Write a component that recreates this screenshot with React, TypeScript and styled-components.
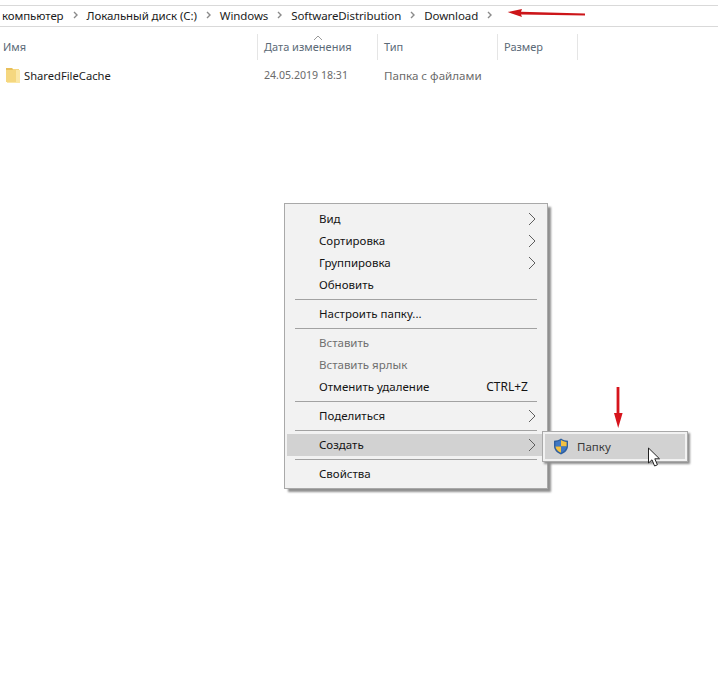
import React from 'react';
import styled, { createGlobalStyle } from 'styled-components';

const GlobalStyle = createGlobalStyle`
  html, body {
    margin: 0;
    padding: 0;
    background: #fff;
  }
  body {
    font-family: "Noto Sans", "Open Sans", sans-serif;
    font-size: 12px;
    color: #1a1a1a;
  }
`;

const Page = styled.div`
  position: relative;
  width: 718px;
  height: 699px;
  overflow: hidden;
  padding-top: 5px;
  box-sizing: border-box;
`;

const AddressBar = styled.div`
  display: flex;
  align-items: center;
  height: 18px;
  padding: 0 0 2px 2px;
  border-top: 1px solid #d9d9d9;
  border-bottom: 1px solid #d9d9d9;
  white-space: nowrap;
`;

const Crumb = styled.span`
  font-size: 11.5px;
  letter-spacing: -0.1px;
  color: #1c1c1c;
`;

const CrumbSep = styled.svg`
  width: 23px;
  height: 8px;
  flex: none;
  fill: none;
  stroke: #8a8a8a;
  stroke-width: 1.4;
`;

const HeaderRow = styled.div`
  display: grid;
  grid-template-columns: 258px 120px 120px 80px;
  justify-content: start;
  height: 26px;
  margin-top: 7px;
  position: relative;
`;

const HeaderCell = styled.div<{ $first?: boolean }>`
  display: flex;
  align-items: center;
  padding-left: ${(p) => (p.$first ? '3px' : '6px')};
  padding-bottom: 2px;
  font-size: 11px;
  color: #5b6a77;
  border-right: 1px solid #e5e5e5;
`;

const SortCaret = styled.svg`
  position: absolute;
  left: 313px;
  top: 1px;
  width: 10px;
  height: 6px;
  fill: none;
  stroke: #9a9a9a;
`;

const FileRow = styled.div`
  display: grid;
  grid-template-columns: 258px 120px 196px;
  align-items: center;
  height: 20px;
  margin-top: 5px;
`;

const FileName = styled.div`
  display: flex;
  align-items: center;
  gap: 4px;
  padding-left: 6px;
  font-size: 11.2px;
  color: #1c1c1c;
`;

const FileMeta = styled.div<{ $size: number }>`
  padding-left: 6px;
  font-size: ${(p) => p.$size}px;
  color: #6b6b6b;
`;

const Menu = styled.div`
  position: absolute;
  left: 284px;
  top: 203px;
  width: 258px;
  padding: 4px 2px 3px;
  background: #f2f2f2;
  border: 1px solid #a9a9a9;
  box-shadow: 3px 3px 2px -0.5px #8f8f8f;
`;

const Item = styled.div<{ $disabled?: boolean; $active?: boolean }>`
  display: flex;
  align-items: center;
  justify-content: space-between;
  box-sizing: border-box;
  height: 22px;
  padding: 0 9px 2px 32px;
  font-size: 11.5px;
  color: ${(p) => (p.$disabled ? '#6f6f6f' : '#141414')};
  background: ${(p) => (p.$active ? '#d2d2d2' : 'transparent')};
`;

const Shortcut = styled.span`
  margin-right: 8px;
  font-size: 12px;
`;

const Chevron = styled.svg`
  width: 8px;
  height: 14px;
  margin-top: 2px;
  fill: none;
  stroke: #5f5f5f;
  stroke-width: 1;
`;

const Divider = styled.div`
  height: 1px;
  margin: 3px 8px 3px 8px;
  background: #a2a2a2;
`;

const SubMenu = styled.div`
  position: absolute;
  left: 542px;
  top: 431px;
  width: 140px;
  padding: 2px;
  background: #f2f2f2;
  border: 1px solid #a9a9a9;
  box-shadow: 2px 2px 2px #8f8f8f;
`;

const SubItem = styled.div`
  display: flex;
  align-items: center;
  gap: 8px;
  height: 25px;
  padding-left: 8px;
  font-size: 11.5px;
  color: #3a3a3a;
  background: #d2d2d2;
`;

const Overlay = styled.svg`
  position: absolute;
  overflow: visible;
`;

const TopArrow = styled(Overlay)`
  left: 505px;
  top: 8px;
  width: 80px;
  height: 12px;
`;

const DownArrow = styled(Overlay)`
  left: 612px;
  top: 386px;
  width: 12px;
  height: 44px;
`;

const Cursor = styled(Overlay)`
  left: 647px;
  top: 447px;
  width: 14px;
  height: 21px;
`;

const crumbs = ['компьютер', 'Локальный диск (C:)', 'Windows', 'SoftwareDistribution', 'Download'];

const Sep = () => (
  <CrumbSep viewBox="0 0 23 8">
    <path d="M10 1 L13 4 L10 7" />
  </CrumbSep>
);

const Arrow = () => (
  <Chevron viewBox="0 0 8 14">
    <path d="M1 1 L7 7 L1 13" />
  </Chevron>
);

function App() {
  return (
    <Page>
      <GlobalStyle />
      <AddressBar>
        {crumbs.map((c) => (
          <React.Fragment key={c}>
            <Crumb>{c}</Crumb>
            <Sep />
          </React.Fragment>
        ))}
      </AddressBar>

      <HeaderRow>
        <SortCaret viewBox="0 0 10 6">
          <path d="M1 5 L5 1 L9 5" />
        </SortCaret>
        <HeaderCell $first>Имя</HeaderCell>
        <HeaderCell>Дата изменения</HeaderCell>
        <HeaderCell>Тип</HeaderCell>
        <HeaderCell>Размер</HeaderCell>
      </HeaderRow>

      <FileRow>
        <FileName>
          <svg width="14" height="16" viewBox="0 0 14 16">
            <path d="M0 1 H6 L7 2 H13 V15 H0 Z" fill="#f5d77f" />
            <path d="M10 3 H14 V16 H1 V15 H10 Z" fill="#fbe7a6" />
            <path d="M0 1 H6 L7 3 H0 Z" fill="#e8bf5a" />
          </svg>
          SharedFileCache
        </FileName>
        <FileMeta $size={10.6}>24.05.2019 18:31</FileMeta>
        <FileMeta $size={11.6}>Папка с файлами</FileMeta>
      </FileRow>

      <Menu>
        <Item>Вид<Arrow /></Item>
        <Item>Сортировка<Arrow /></Item>
        <Item>Группировка<Arrow /></Item>
        <Item>Обновить</Item>
        <Divider />
        <Item>Настроить папку...</Item>
        <Divider />
        <Item $disabled>Вставить</Item>
        <Item $disabled>Вставить ярлык</Item>
        <Item>Отменить удаление<Shortcut>CTRL+Z</Shortcut></Item>
        <Divider />
        <Item>Поделиться<Arrow /></Item>
        <Divider />
        <Item $active>Создать<Arrow /></Item>
        <Divider />
        <Item>Свойства</Item>
      </Menu>

      <SubMenu>
        <SubItem>
          <svg width="16" height="17" viewBox="0 0 16 17">
            <path d="M8 0.5 C10 2 12.5 2.6 15 2.8 V8 C15 12 12 15 8 16.5 C4 15 1 12 1 8 V2.8 C3.5 2.6 6 2 8 0.5 Z" fill="#2f5f9e" />
            <path d="M8 2 V8.5 H2.4 V4 C4.4 3.8 6.4 3.2 8 2 Z" fill="#3f78c4" />
            <path d="M8 2 C9.6 3.2 11.6 3.8 13.6 4 V8.5 H8 Z" fill="#f3c141" />
            <path d="M2.4 8.5 H8 V14.8 C5 13.5 2.8 11.5 2.4 8.5 Z" fill="#f3c141" />
            <path d="M8 8.5 H13.6 C13.2 11.5 11 13.5 8 14.8 Z" fill="#3f78c4" />
          </svg>
          Папку
        </SubItem>
      </SubMenu>

      <TopArrow viewBox="0 0 80 12">
        <path d="M2.5 4 L17 1 L16 3.8 L80 5.5 V7.5 L16 6.6 L17 9 Z" fill="#cc1519" />
      </TopArrow>

      <DownArrow viewBox="0 0 12 44">
        <path d="M4.6 1 H7.4 V27 H10.6 L6.2 42 L2 27 H4.6 Z" fill="#d6141c" />
      </DownArrow>

      <Cursor viewBox="0 0 14 21">
        <path d="M1.5 1 V16 L5 12.8 L7.6 19 L10.4 17.8 L7.8 11.8 L12.5 11.8 Z" fill="#fff" stroke="#222" strokeWidth="1" />
      </Cursor>
    </Page>
  );
}

export default App;
